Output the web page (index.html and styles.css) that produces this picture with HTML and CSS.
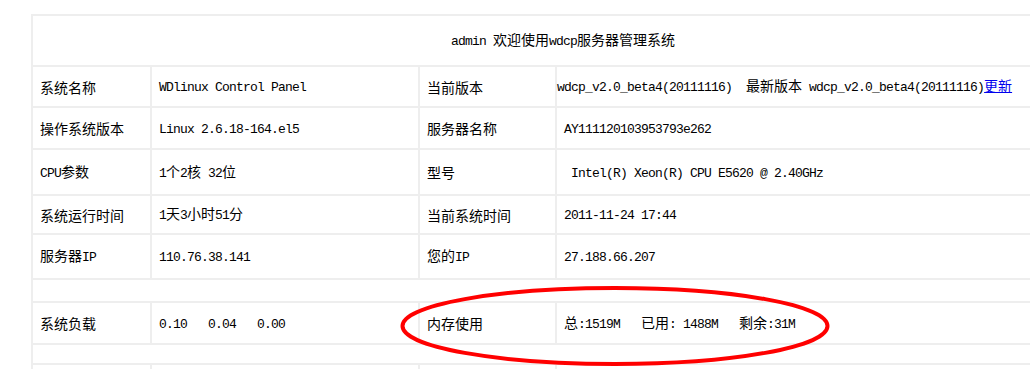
FILE: index.html
```html
<!DOCTYPE html>
<html lang="zh-CN">
<head>
<meta charset="utf-8">
<title>wdcp</title>
<link rel="stylesheet" href="styles.css">
</head>
<body>
<div class="page">
<table class="info">
<colgroup>
<col class="c1"><col class="c2"><col class="c3"><col class="c4">
</colgroup>
<tr class="h-head"><td colspan="4" class="title"><span class="en">admin </span>欢迎使用<span class="en">wdcp</span>服务器管理系统</td></tr>
<tr class="h39"><td>系统名称</td><td><span class="en">WDlinux Control Panel</span></td><td>当前版本</td><td class="flush"><span class="en">wdcp_v2.0_beta4(20111116)&nbsp; </span>最新版本<span class="en"> wdcp_v2.0_beta4(20111116)</span><a href="#">更新</a></td></tr>
<tr class="h40"><td>操作系统版本</td><td><span class="en">Linux 2.6.18-164.el5</span></td><td>服务器名称</td><td><span class="en">AY111120103953793e262</span></td></tr>
<tr class="h44"><td><span class="en">CPU</span>参数</td><td><span class="en">1</span>个<span class="en">2</span>核<span class="en"> 32</span>位</td><td>型号</td><td><span class="en">&nbsp;Intel(R) Xeon(R) CPU E5620 @ 2.40GHz</span></td></tr>
<tr class="h37"><td>系统运行时间</td><td><span class="en">1</span>天<span class="en">3</span>小时<span class="en">51</span>分</td><td>当前系统时间</td><td><span class="en">2011-11-24 17:44</span></td></tr>
<tr class="h43"><td>服务器<span class="en">IP</span></td><td><span class="en">110.76.38.141</span></td><td>您的<span class="en">IP</span></td><td><span class="en">27.188.66.207</span></td></tr>
<tr class="h21"><td colspan="4"></td></tr>
<tr class="h40"><td>系统负载</td><td><span class="en">0.10&nbsp;&nbsp;&nbsp;0.04&nbsp;&nbsp;&nbsp;0.00</span></td><td>内存使用</td><td>总<span class="en">:1519M&nbsp;&nbsp;&nbsp;</span>已用<span class="en">: 1488M&nbsp;&nbsp;&nbsp;</span>剩余<span class="en">:31M</span></td></tr>
<tr class="h18"><td colspan="4"></td></tr>
<tr class="h40"><td></td><td></td><td></td><td></td></tr>
</table>
<svg class="mark" width="440" height="90" viewBox="0 0 440 90" aria-hidden="true">
<ellipse cx="220" cy="45" rx="212.5" ry="38" fill="none" stroke="#ff0000" stroke-width="4"/>
</svg>
</div>
</body>
</html>
```

FILE: styles.css
```css
html, body {
  margin: 0;
  padding: 0;
  background: #ffffff;
  overflow: hidden;
}

.page {
  position: relative;
  padding: 14px 0 0 31px;
  width: 1200px;
}

.info {
  table-layout: fixed;
  width: 1064px;
  border-collapse: separate;
  border-spacing: 2px;
  background: #eeeeee;
  font-family: "Noto Sans CJK SC", sans-serif;
  font-size: 14px;
  color: #000000;
}

.c1 { width: 117px; }
.c2 { width: 266px; }
.c3 { width: 135px; }
.c4 { width: 536px; }

.info td {
  background: #ffffff;
  box-sizing: border-box;
  padding: 0 7px;
  vertical-align: middle;
  white-space: nowrap;
  line-height: 20px;
}

.info td.title {
  text-align: center;
}

.info td.flush {
  padding-left: 0;
}

.en {
  font-family: "Liberation Mono", monospace;
  font-size: 13px;
  letter-spacing: -0.8px;
}

.info a {
  color: #0000ee;
  text-decoration: underline;
}

.h-head td { height: 49px; }
.h39 td { height: 39px; }
.h40 td { height: 40px; }
.h44 td { height: 44px; }
.h37 td { height: 37px; }
.h43 td { height: 43px; }
.h21 td { height: 21px; }
.h18 td { height: 18px; }

.mark {
  position: absolute;
  left: 395px;
  top: 281px;
}
```
